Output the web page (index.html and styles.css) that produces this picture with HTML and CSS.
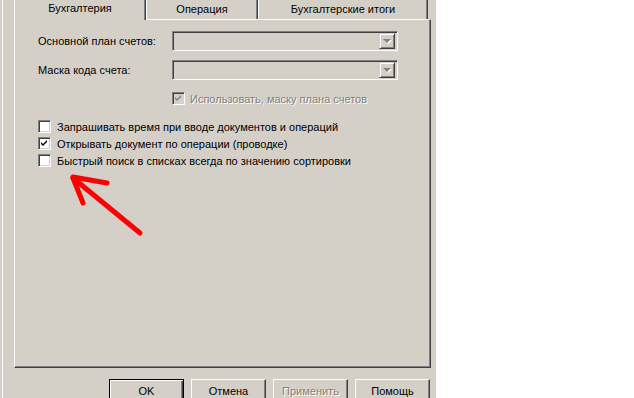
FILE: index.html
```html
<!DOCTYPE html>
<html lang="ru">
<head>
    <meta charset="UTF-8">
    <title>Параметры</title>
    <link rel="stylesheet" href="styles.css">
</head>
<body>
    <div class="dialog">
        <div class="tabs">
            <div class="tab active">Бухгалтерия</div>
            <div class="tab tab-op">Операция</div>
            <div class="tab tab-totals">Бухгалтерские итоги</div>
        </div>
        <div class="panel">
            <div class="field-row first">
                <span class="label">Основной план счетов:</span>
                <div class="combo"><span class="drop"><span class="tri"></span></span></div>
            </div>
            <div class="field-row">
                <span class="label">Маска кода счета:</span>
                <div class="combo"><span class="drop"><span class="tri"></span></span></div>
            </div>
            <div class="check-row disabled-row">
                <span class="box disabled checked">
                    <svg width="7" height="7" viewBox="0 0 7 7"><path d="M0 2 L2 4 L6 0 L6 2 L2 6 L0 4 Z" fill="#808080"/></svg>
                </span>
                <span class="text-disabled">Использовать, маску плана счетов</span>
            </div>
            <div class="checks">
                <div class="check-row">
                    <span class="box"></span>
                    <span>Запрашивать время при вводе документов и операций</span>
                </div>
                <div class="check-row">
                    <span class="box checked">
                        <svg width="7" height="7" viewBox="0 0 7 7"><path d="M0 2 L2 4 L6 0 L6 2 L2 6 L0 4 Z" fill="#000"/></svg>
                    </span>
                    <span>Открывать документ по операции (проводке)</span>
                </div>
                <div class="check-row">
                    <span class="box"></span>
                    <span>Быстрый поиск в списках всегда по значению сортировки</span>
                </div>
            </div>
        </div>
        <div class="buttons">
            <button class="btn default">OK</button>
            <button class="btn">Отмена</button>
            <button class="btn" disabled>Применить</button>
            <button class="btn">Помощь</button>
        </div>
    </div>
    <!-- red arrow drawn over the screenshot -->
    <svg class="arrow" width="634" height="398" viewBox="0 0 634 398">
        <g stroke="#ff0000" stroke-width="5" stroke-linecap="round" fill="none">
            <path d="M73 178 L140 233"/>
            <path d="M73 177 L107 183"/>
            <path d="M73 178 L83 203"/>
        </g>
    </svg>
</body>
</html>
```

FILE: styles.css
```css
body {
    margin: 0;
    width: 634px;
    height: 398px;
    overflow: hidden;
    background: #ffffff;
    font-family: "Liberation Sans", Arial, sans-serif;
    font-size: 11px;
    color: #000;
}

.dialog {
    width: 436px;
    height: 398px;
    box-sizing: border-box;
    padding-left: 14px;
    background: #d4d0c8;
    box-shadow: inset 2px 0 0 #d4d0c8, inset 3px 0 0 #ffffff;
    overflow: hidden;
}

.tabs {
    display: flex;
    height: 19px;
}

.tab {
    box-sizing: border-box;
    height: 19px;
    line-height: 18px;
    text-align: center;
    border-left: 1px solid #ffffff;
    border-right: 1px solid #404040;
    box-shadow: inset -1px 0 0 #808080;
}

.tab.active {
    width: 132px;
    height: 20px;
    position: relative;
    z-index: 1;
    background: #d4d0c8;
    line-height: 17px;
}

.tab-op {
    width: 112px;
}

.tab-totals {
    width: 170px;
}

.panel {
    box-sizing: border-box;
    width: 417px;
    height: 349px;
    padding-left: 23px;
    border-top: 1px solid #ffffff;
    border-left: 1px solid #ffffff;
    border-right: 1px solid #404040;
    border-bottom: 1px solid #404040;
    box-shadow: inset -1px -1px 0 #808080;
}

.field-row {
    display: flex;
    align-items: center;
    height: 20px;
    margin-top: 9px;
}

.field-row.first {
    margin-top: 11px;
}

.label {
    width: 134px;
}

.combo {
    box-sizing: border-box;
    width: 226px;
    height: 20px;
    display: flex;
    justify-content: flex-end;
    align-items: center;
    padding-right: 2px;
    background: #d4d0c8;
    border-top: 1px solid #808080;
    border-left: 1px solid #808080;
    border-right: 1px solid #ffffff;
    border-bottom: 1px solid #ffffff;
    box-shadow: inset 1px 1px 0 #404040, inset -1px -1px 0 #d4d0c8;
}

.drop {
    box-sizing: border-box;
    width: 16px;
    height: 16px;
    display: flex;
    align-items: center;
    justify-content: center;
    border-top: 1px solid #d4d0c8;
    border-left: 1px solid #d4d0c8;
    border-right: 1px solid #404040;
    border-bottom: 1px solid #404040;
    box-shadow: inset 1px 1px 0 #ffffff, inset -1px -1px 0 #808080;
}

.tri {
    width: 0;
    height: 0;
    border-left: 4px solid transparent;
    border-right: 4px solid transparent;
    border-top: 4px solid #808080;
    filter: drop-shadow(1px 1px 0 #ffffff);
}

.check-row {
    display: flex;
    align-items: center;
    gap: 6px;
    height: 17px;
    white-space: nowrap;
}

.disabled-row {
    margin-top: 10px;
    margin-left: 134px;
    gap: 5px;
}

.checks {
    margin-top: 11px;
}

.box {
    box-sizing: border-box;
    width: 13px;
    height: 13px;
    flex: none;
    display: flex;
    align-items: center;
    justify-content: center;
    background: #ffffff;
    border-top: 1px solid #808080;
    border-left: 1px solid #808080;
    border-right: 1px solid #ffffff;
    border-bottom: 1px solid #ffffff;
    box-shadow: inset 1px 1px 0 #404040, inset -1px -1px 0 #d4d0c8;
}

.box.disabled {
    background: #d4d0c8;
}

.text-disabled {
    color: #808080;
    text-shadow: 1px 1px 0 #ffffff;
}

.buttons {
    display: flex;
    gap: 7px;
    margin-top: 11px;
    margin-left: 95px;
}

.btn {
    box-sizing: border-box;
    width: 75px;
    height: 23px;
    padding: 0;
    font-family: inherit;
    font-size: 11px;
    color: #000;
    background: #d4d0c8;
    border-top: 1px solid #ffffff;
    border-left: 1px solid #ffffff;
    border-right: 1px solid #404040;
    border-bottom: 1px solid #404040;
    box-shadow: inset -1px -1px 0 #808080;
    border-radius: 0;
}

.btn.default {
    border: 1px solid #000;
    box-shadow: inset 1px 1px 0 #ffffff, inset -1px -1px 0 #404040, inset -2px -2px 0 #808080;
}

.btn:disabled {
    color: #808080;
    text-shadow: 1px 1px 0 #ffffff;
}

.arrow {
    position: absolute;
    left: 0;
    top: 0;
    pointer-events: none;
}
```
